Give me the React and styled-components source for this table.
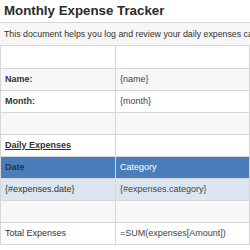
import React from "react";
import styled, { createGlobalStyle } from "styled-components";

const GlobalStyle = createGlobalStyle`
  body {
    margin: 0;
    background: #fff;
    font-family: "Liberation Sans", Arial, sans-serif;
    color: #333;
  }
`;

const rows = [
  { label: "", value: "" },
  { label: "Name:", value: "{name}", bold: true },
  { label: "Month:", value: "{month}", bold: true },
  { label: "", value: "" },
  { label: "Daily Expenses", value: "", section: true },
  { label: "Date", value: "Category", head: true },
  { label: "{#expenses.date}", value: "{#expenses.category}", data: true },
  { label: "", value: "" },
  { label: "Total Expenses", value: "=SUM(expenses[Amount])" },
];

export default function App() {
  return (
    <>
      <GlobalStyle />
      <Sheet>
        <Title>Monthly Expense Tracker</Title>
        <Intro>This document helps you log and review your daily expenses categorised by type.</Intro>
        <Grid>
          <tbody>
            {rows.map((r, i) => (
              <Row key={i} $striped={i % 2 === 1} $head={r.head} $data={r.data}>
                <LabelCell $bold={r.bold || r.head} $head={r.head}>
                  {r.section ? <Section>{r.label}</Section> : r.label}
                </LabelCell>
                <ValueCell $head={r.head}>{r.value}</ValueCell>
              </Row>
            ))}
          </tbody>
        </Grid>
      </Sheet>
    </>
  );
}

const Sheet = styled.div`
  width: 250px;
  overflow: hidden;
`;

const Title = styled.h1`
  margin: 0;
  height: 22px;
  padding: 0 4px;
  font-size: 13.3px;
  font-weight: bold;
  line-height: 22px;
  color: #2b2b2b;
  border-bottom: 1px solid #d6d6d6;
  white-space: nowrap;
`;

const Intro = styled.p`
  margin: 0;
  height: 22px;
  padding: 0 4px;
  font-size: 8.8px;
  line-height: 22px;
  background: #f6f6f6;
  border-bottom: 1px solid #d6d6d6;
  white-space: nowrap;
  overflow: hidden;
`;

const Grid = styled.table`
  width: 100%;
  border-collapse: collapse;
  table-layout: fixed;
  font-size: 9px;
`;

const Row = styled.tr`
  height: 22px;
  background: ${(p) =>
    p.$head ? "#4a7ebb" : p.$data ? "#dce6f1" : p.$striped ? "#f7f7f7" : "#fff"};
`;

const Cell = styled.td`
  padding: 0 4px;
  border: 1px solid #d6d6d6;
  border-top: none;
  white-space: nowrap;
  overflow: hidden;
`;

const LabelCell = styled(Cell)`
  width: 106px;
  font-weight: ${(p) => (p.$bold ? "bold" : "normal")};
  color: ${(p) => (p.$head ? "#25324a" : "#333")};
`;

const ValueCell = styled(Cell)`
  color: ${(p) => (p.$head ? "#fff" : "#444")};
`;

const Section = styled.span`
  font-weight: bold;
  text-decoration: underline;
`;
